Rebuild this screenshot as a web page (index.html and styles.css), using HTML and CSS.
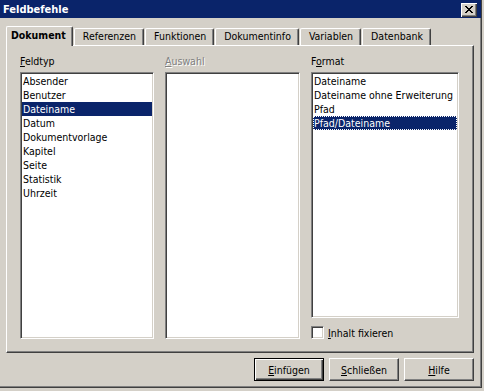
FILE: index.html
```html
<!DOCTYPE html>
<html lang="de">
<head>
    <meta charset="UTF-8">
    <title>Feldbefehle</title>
    <link rel="stylesheet" href="styles.css">
</head>
<body>
    <div class="window">
        <div class="titlebar">
            <span class="title">Feldbefehle</span>
            <span class="close">
                <svg width="8" height="7" viewBox="0 0 8 7" shape-rendering="crispEdges">
                    <path d="M0 0h2v1h-2z M6 0h2v1h-2z M1 1h2v1h-2z M5 1h2v1h-2z M2 2h4v1h-4z M3 3h2v1h-2z M2 4h4v1h-4z M1 5h2v1h-2z M5 5h2v1h-2z M0 6h2v1h-2z M6 6h2v1h-2z" fill="#000"/>
                </svg>
            </span>
        </div>

        <div class="content">
            <div class="tabs">
                <div class="tab active">Dokument</div>
                <div class="tab">Referenzen</div>
                <div class="tab">Funktionen</div>
                <div class="tab">Dokumentinfo</div>
                <div class="tab">Variablen</div>
                <div class="tab">Datenbank</div>
            </div>

            <div class="panel">
                <div class="column feldtyp">
                    <div class="caption"><u>F</u>eldtyp</div>
                    <ul class="list">
                        <li>Absender</li>
                        <li>Benutzer</li>
                        <li class="selected">Dateiname</li>
                        <li>Datum</li>
                        <li>Dokumentvorlage</li>
                        <li>Kapitel</li>
                        <li>Seite</li>
                        <li>Statistik</li>
                        <li>Uhrzeit</li>
                    </ul>
                </div>

                <div class="column auswahl">
                    <div class="caption disabled"><u>A</u>uswahl</div>
                    <ul class="list"></ul>
                </div>

                <div class="column format">
                    <div class="caption">F<u>o</u>rmat</div>
                    <ul class="list">
                        <li>Dateiname</li>
                        <li>Dateiname ohne Erweiterung</li>
                        <li>Pfad</li>
                        <li class="selected focused">Pfad/Dateiname</li>
                    </ul>
                    <label class="check">
                        <span class="box"></span>
                        <span><u>I</u>nhalt fixieren</span>
                    </label>
                </div>
            </div>

            <div class="buttons">
                <button class="default"><u>E</u>infügen</button>
                <button><u>S</u>chließen</button>
                <button><u>H</u>ilfe</button>
            </div>
        </div>
    </div>
</body>
</html>
```

FILE: styles.css
```css
body {
    margin: 0;
    padding: 0;
    background-color: #d4d0c8;
    font-family: "DejaVu Sans Condensed", "DejaVu Sans", sans-serif;
    font-size: 10.5px;
    color: #000;
}
u {
    text-decoration: underline;
    text-underline-offset: 1px;
}
.window {
    width: 482px;
    height: 388px;
    box-sizing: border-box;
    background-color: #d4d0c8;
    border-right: 1px solid #404040;
    border-bottom: 1px solid #404040;
    box-shadow: inset -1px -1px 0 #808080;
}
.titlebar {
    height: 18px;
    background-color: #0a246a;
    display: flex;
    justify-content: space-between;
    align-items: center;
    padding: 0 4px 0 3px;
}
.title {
    color: #fff;
    font-weight: bold;
    font-size: 11px;
}
.close {
    width: 16px;
    height: 14px;
    margin-top: 2px;
    box-sizing: border-box;
    background-color: #d4d0c8;
    box-shadow: inset 1px 1px 0 #fff, inset -1px -1px 0 #404040, inset -2px -2px 0 #808080;
    display: flex;
    align-items: center;
    justify-content: center;
    padding: 0 1px 1px 0;
}
.content {
    padding: 8px 7px 0 6px;
}
.tabs {
    display: flex;
    align-items: flex-end;
    height: 19px;
}
.tab {
    height: 17px;
    box-sizing: border-box;
    padding: 0 7px 0 8px;
    line-height: 15px;
    border-top: 1px solid #fff;
    border-left: 1px solid #fff;
    border-right: 1px solid #404040;
    border-radius: 2px 2px 0 0;
    box-shadow: inset -1px 0 0 #808080;
    margin-right: 1px;
}
.tab.active {
    height: 20px;
    margin-bottom: -1px;
    font-weight: bold;
    line-height: 17px;
    background-color: #d4d0c8;
    position: relative;
    z-index: 1;
    padding: 0 6px 0 4px;
}
.panel {
    height: 308px;
    box-sizing: border-box;
    display: flex;
    gap: 11px;
    padding: 8px 14px 13px 13px;
    border-top: 1px solid #fff;
    border-left: 1px solid #fff;
    border-right: 1px solid #404040;
    border-bottom: 1px solid #404040;
    box-shadow: inset -1px -1px 0 #808080;
}
.column {
    display: flex;
    flex-direction: column;
}
.feldtyp {
    width: 134px;
}
.auswahl {
    width: 135px;
}
.format {
    width: 148px;
}
.caption {
    line-height: 14px;
    margin-bottom: 4px;
}
.caption.disabled {
    color: #808080;
    text-shadow: 1px 1px 0 #fff;
}
.list {
    flex: 1;
    list-style: none;
    margin: 0;
    padding: 1px;
    background-color: #fff;
    border-top: 1px solid #808080;
    border-left: 1px solid #808080;
    border-right: 1px solid #fff;
    border-bottom: 1px solid #fff;
    box-shadow: inset 1px 1px 0 #404040, inset -1px -1px 0 #d4d0c8;
}
.list li {
    line-height: 14px;
    padding-left: 1px;
    white-space: nowrap;
}
.list li.selected {
    background-color: #0a246a;
    color: #fff;
}
.list li.focused {
    outline: 1px dotted #fff;
    outline-offset: -1px;
}
.check {
    display: flex;
    align-items: center;
    gap: 4px;
    margin-top: 8px;
    height: 13px;
}
.check .box {
    width: 13px;
    height: 13px;
    box-sizing: border-box;
    background-color: #fff;
    border-top: 1px solid #808080;
    border-left: 1px solid #808080;
    border-right: 1px solid #fff;
    border-bottom: 1px solid #fff;
    box-shadow: inset 1px 1px 0 #404040, inset -1px -1px 0 #d4d0c8;
}
.buttons {
    display: flex;
    justify-content: flex-end;
    gap: 5px;
    margin-top: 5px;
}
.buttons button {
    width: 70px;
    height: 23px;
    font-family: inherit;
    font-size: inherit;
    color: #000;
    background-color: #d4d0c8;
    border-top: 1px solid #fff;
    border-left: 1px solid #fff;
    border-right: 1px solid #404040;
    border-bottom: 1px solid #404040;
    box-shadow: inset -1px -1px 0 #808080;
    padding: 0;
}
.buttons button.default {
    border: 1px solid #000;
    box-shadow: inset 1px 1px 0 #fff, inset -1px -1px 0 #404040, inset -2px -2px 0 #808080;
}
```
